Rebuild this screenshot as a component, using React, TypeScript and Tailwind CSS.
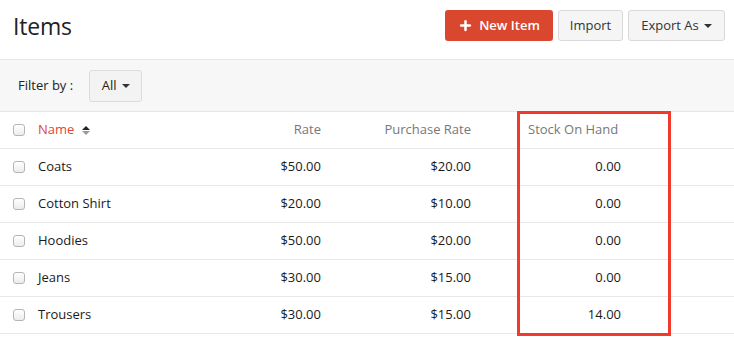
import { Plus } from 'lucide-react';

type Item = {
    name: string;
    rate: string;
    purchaseRate: string;
    stock: string;
};

const items: Item[] = [
    { name: 'Coats', rate: '$50.00', purchaseRate: '$20.00', stock: '0.00' },
    { name: 'Cotton Shirt', rate: '$20.00', purchaseRate: '$10.00', stock: '0.00' },
    { name: 'Hoodies', rate: '$50.00', purchaseRate: '$20.00', stock: '0.00' },
    { name: 'Jeans', rate: '$30.00', purchaseRate: '$15.00', stock: '0.00' },
    { name: 'Trousers', rate: '$30.00', purchaseRate: '$15.00', stock: '14.00' },
];

function Caret() {
    return <span className="inline-block ml-[5px] w-0 h-0 border-x-[4px] border-x-transparent border-t-[4px] border-t-[#333] align-middle" />;
}

function Checkbox() {
    return (
        <span className="block w-[12px] h-[12px] rounded-[3px] border border-[#b5b5b5] bg-gradient-to-b from-white to-[#ececec]" />
    );
}

export default function App() {
    return (
        <div className="relative w-[734px] h-[351px] bg-white text-[#1a1a1a] font-['Open_Sans',sans-serif] overflow-hidden">
            <div className="flex items-start justify-between h-[59px] pt-[10px] pl-[13px] pr-[9px]">
                <h1 className="h-[31px] leading-[31px] mt-[1px] text-[23px] font-normal text-[#222] tracking-[-0.2px]">Items</h1>
                <div className="flex items-center gap-[5px]">
                    <button className="flex items-center h-[31px] w-[108px] justify-center gap-[6px] rounded-[3px] bg-[#d9472f] text-white text-[13px] font-semibold">
                        <Plus size={15} strokeWidth={4} />
                        New Item
                    </button>
                    <button className="h-[31px] w-[65px] rounded-[3px] border border-[#d9d9d9] bg-[#f5f5f5] text-[13px] text-[#333]">
                        Import
                    </button>
                    <button className="flex items-center justify-center h-[31px] w-[97px] rounded-[3px] border border-[#d9d9d9] bg-[#f5f5f5] text-[13px] text-[#333]">
                        Export As
                        <Caret />
                    </button>
                </div>
            </div>

            <div className="flex items-center h-[53px] px-[18px] bg-[#f7f7f7] border-y border-[#e6e6e6]">
                <span className="text-[13px] text-[#222] mr-[16px]">Filter by :</span>
                <button className="flex items-center justify-center h-[32px] w-[53px] rounded-[3px] border border-[#dcdcdc] bg-[#f3f3f3] text-[13px] text-[#222]">
                    All
                    <Caret />
                </button>
            </div>

            <div className="text-[13px]">
                <div className="grid grid-cols-[38px_183px_100px_150px_150px_1fr] items-center h-[37px] border-b border-[#e8e8e8] text-[#777]">
                    <div className="pl-[13px]">
                        <Checkbox />
                    </div>
                    <div className="flex items-center text-[#e0453a]">
                        Name
                        <span className="ml-[8px] flex flex-col gap-[1px]">
                            <span className="w-0 h-0 border-x-[4px] border-x-transparent border-b-[4px] border-b-[#222]" />
                            <span className="w-0 h-0 border-x-[4px] border-x-transparent border-t-[4px] border-t-[#999]" />
                        </span>
                    </div>
                    <div className="text-right">Rate</div>
                    <div className="text-right">Purchase Rate</div>
                    <div className="pl-[57px]">Stock On Hand</div>
                    <div />
                </div>
                {items.map((item) => (
                    <div
                        key={item.name}
                        className="grid grid-cols-[38px_183px_100px_150px_150px_1fr] items-center h-[37px] border-b border-[#e8e8e8]"
                    >
                        <div className="pl-[13px]">
                            <Checkbox />
                        </div>
                        <div>{item.name}</div>
                        <div className="text-right">{item.rate}</div>
                        <div className="text-right">{item.purchaseRate}</div>
                        <div className="text-right">{item.stock}</div>
                        <div />
                    </div>
                ))}
            </div>

            <div className="absolute left-[517px] top-[111px] w-[154px] h-[225px] border-[3px] border-[#f2392c]" />
        </div>
    );
}
